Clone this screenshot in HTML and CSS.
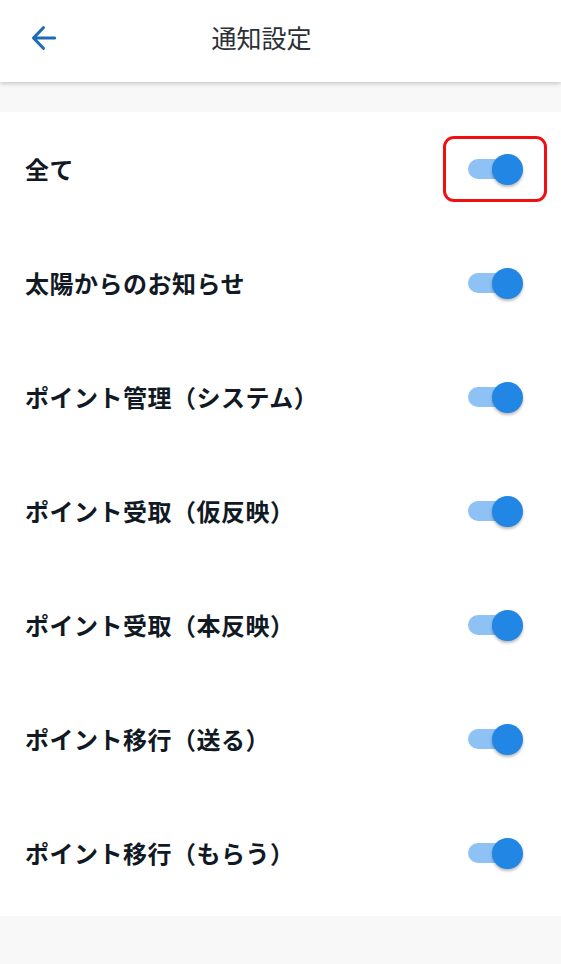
FILE: index.html
```html
<!DOCTYPE html>
<html lang="ja">
<head>
<meta charset="utf-8">
<link rel="stylesheet" href="styles.css">
</head>
<body>
<header class="topbar">
  <button class="back" aria-label="戻る">
    <svg width="30" height="30" viewBox="0 0 24 24"><path d="M20.5 12H4M11.5 3.8L3.6 12l7.9 8.2" fill="none" stroke="#1c6db6" stroke-width="2.5" stroke-linecap="round" stroke-linejoin="round"/></svg>
  </button>
  <h1 class="title">通知設定</h1>
</header>
<div class="spacer"></div>
<ul class="list">
  <li class="row"><span class="label">全て</span><span class="switch-wrap highlight"><span class="switch"><span class="thumb"></span></span></span></li>
  <li class="row"><span class="label">太陽からのお知らせ</span><span class="switch-wrap"><span class="switch"><span class="thumb"></span></span></span></li>
  <li class="row"><span class="label">ポイント管理（システム）</span><span class="switch-wrap"><span class="switch"><span class="thumb"></span></span></span></li>
  <li class="row"><span class="label">ポイント受取（仮反映）</span><span class="switch-wrap"><span class="switch"><span class="thumb"></span></span></span></li>
  <li class="row"><span class="label">ポイント受取（本反映）</span><span class="switch-wrap"><span class="switch"><span class="thumb"></span></span></span></li>
  <li class="row"><span class="label">ポイント移行（送る）</span><span class="switch-wrap"><span class="switch"><span class="thumb"></span></span></span></li>
  <li class="row"><span class="label">ポイント移行（もらう）</span><span class="switch-wrap"><span class="switch"><span class="thumb"></span></span></span></li>
</ul>
</body>
</html>
```
FILE: styles.css
```css
* { box-sizing: border-box; }
html, body { margin: 0; padding: 0; }
body {
  background: #f8f8f8;
  font-family: "Noto Sans CJK JP", "Noto Sans", sans-serif;
  width: 561px;
  height: 964px;
  overflow: hidden;
}
.topbar {
  height: 82px;
  background: #fff;
  display: flex;
  align-items: center;
  justify-content: center;
  position: relative;
  box-shadow: 0 2px 4px rgba(0,0,0,0.18);
  z-index: 2;
}
.back {
  position: absolute;
  left: 29px;
  top: 23px;
  width: 30px;
  height: 30px;
  padding: 0;
  border: 0;
  background: none;
  display: flex;
  align-items: center;
  justify-content: center;
}
.title {
  margin: 0 38px 9px 0;
  font-size: 25px;
  font-weight: 400;
  color: #2b3036;
  letter-spacing: 0;
}
.spacer { height: 30px; }
.list {
  list-style: none;
  margin: 0;
  padding: 0 0 6px 0;
  background: #fff;
}
.row {
  height: 114px;
  display: flex;
  align-items: center;
  justify-content: space-between;
  padding: 0 38px 0 25px;
}
.label {
  font-size: 24px;
  font-weight: 700;
  color: #111a24;
  letter-spacing: 0.5px;
  margin-top: -2px;
}
.switch-wrap {
  width: 104px;
  height: 66px;
  display: flex;
  align-items: center;
  justify-content: center;
  margin-right: -24px;
  border: 3px solid transparent;
  border-radius: 11px;
  padding-right: 4px;
}
.switch-wrap.highlight { border-color: #f01010; }
.switch {
  position: relative;
  width: 50px;
  height: 20px;
  border-radius: 10px;
  background: #8ec2f4;
}
.thumb {
  position: absolute;
  right: -5px;
  top: -5px;
  width: 31px;
  height: 31px;
  border-radius: 50%;
  background: #2286e5;
  box-shadow: 0 2px 3px rgba(0,0,0,0.28);
}
```
